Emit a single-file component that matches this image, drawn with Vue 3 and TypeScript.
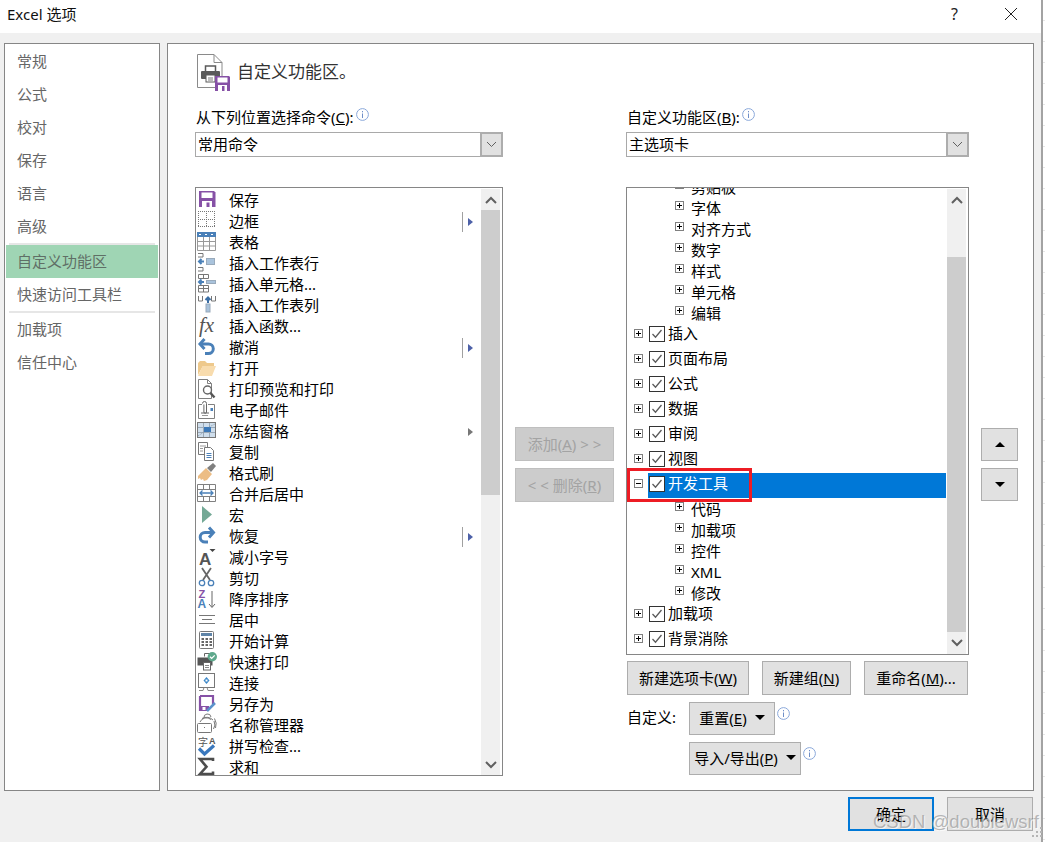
<script setup lang="ts">
const navTop = ['常规', '公式', '校对', '保存', '语言', '高级']
const navBottom = ['加载项', '信任中心']

const b = '#4a80b8'
const lb = '#a9c3dc'
const icons: Record<string, string> = {
  save: `<path fill="#8651a6" d="M2 1h15l1.500 1.500V17H2z"/><rect x="4.500" y="2.500" width="11" height="5.500" fill="#fff"/><rect x="5" y="11" width="10" height="6" fill="#fff"/><rect x="9.500" y="12.500" width="3" height="4.500" fill="#8651a6"/>`,
  border: `<path fill="none" stroke="#777" stroke-dasharray="1 1" d="M1 .5h17M1 8.500h17M1 15.500h17M1.500 0v16M9.500 0v16M17.500 0v16"/>`,
  table: `<rect x="0" y="0" width="19" height="5" fill="${b}"/><path fill="#fff" d="M2 2h2v1H2zM8 2h2v1H8zM14 2h2v1h-2z"/><path fill="none" stroke="#999" d="M.5 5v13.500h18V5M.5 9.500h18M.5 14h18M6.500 5v13.500M12.500 5v13.500"/>`,
  insRow: `<path fill="none" stroke="#777" d="M1 .5h5v3.500H1M1 14.500h5V18H1"/><rect x="9.500" y="5.500" width="8" height="6" fill="${lb}" stroke="#9ab"/><path fill="none" stroke="${b}" stroke-width="2" d="M7 8.500H2M4.500 6L2 8.500 4.500 11"/>`,
  insCell: `<path fill="none" stroke="#777" d="M1.500 .5h10v4h-10zM6.500 .5v4M1.500 11.500h10v6.500h-10zM1.500 14.500h10M6.500 11.500v6.500"/><rect x="9.500" y="6.500" width="9" height="3" fill="${lb}" stroke="#9ab"/><path fill="none" stroke="${b}" stroke-width="2" d="M7 8H2M4.500 5.500L2 8l2.500 2.500"/>`,
  insCol: `<path fill="none" stroke="#777" d="M1.500 1v5h4V1M14.500 1v5h4V1"/><rect x="9" y="9" width="4" height="8" fill="${lb}" stroke="#9ab"/><path fill="none" stroke="#3a6ea5" stroke-width="2" d="M11 8V2.500M8.500 5L11 2.500 13.500 5"/>`,
  fx: `<text x="2" y="16" font-family="Liberation Serif" font-style="italic" font-size="21" fill="#555">fx</text>`,
  undo: `<path fill="none" stroke="${b}" stroke-width="3" d="M4 7h7.500a4.800 4.800 0 0 1 0 9.600H8"/><path fill="none" stroke="${b}" stroke-width="3" d="M7.500 2L3 7l4.500 5"/>`,
  open: `<path fill="#eec98c" d="M1 17V5l2-2h5l2 2h7v3H6L1 17z"/><path fill="#f8dcae" d="M1 18L5.500 8H19l-4 10z"/>`,
  preview: `<path fill="#fff" stroke="#808080" d="M1.500 .5h9l4 4v15h-13z"/><path fill="none" stroke="#808080" d="M10.500 .5v4h4"/><circle cx="10.500" cy="11" r="4" fill="#fff" stroke="#666" stroke-width="1.400"/><path stroke="#555" stroke-width="2.400" d="M13.500 14l4 4.500"/>`,
  mail: `<path fill="none" stroke="#808080" d="M5 4.500H1.500v14h16v-14H11"/><rect x="13.500" y="8" width="2.500" height="3" fill="${b}"/><path fill="none" stroke="#666" d="M5.500 3.500a2 2 0 0 1 4 0v8.500a1.300 1.300 0 0 1-2.600 0V4.500M4 13h8"/><path stroke="#999" d="M5 15.500h6"/>`,
  freeze: `<rect x=".5" y="1.500" width="18" height="15" fill="#fff" stroke="#777"/><path fill="#cfdeec" d="M1 2h17v14H1z"/><path fill="none" stroke="#9aa9b8" d="M1 6.500h17M1 11.500h17M6.500 2v14M12.500 2v14"/><rect x="7" y="6" width="7" height="5" fill="#3b78b8"/><path stroke="#8899aa" stroke-dasharray="1 1" d="M1 15l6-4M12 6l6-3"/>`,
  copy: `<path fill="#fff" stroke="#777" d="M1.500 .5h9v12h-9z"/><path fill="#fff" stroke="#777" d="M7.500 5.500h6l3 3v10h-9z"/><path stroke="${b}" d="M9.500 11.500h5M9.500 13.500h5M9.500 15.500h5"/><path stroke="#999" d="M3 4h6M3 6.500h3M3 9h3"/>`,
  brush: `<path fill="#ecbd85" d="M1 13L9 5l6 6-5 6-3 1-1-2-2 1-1-2-2 1z"/><path fill="#7f7f7f" d="M10 5l6-5 3 3-5 6z"/>`,
  merge: `<path fill="none" stroke="#808080" d="M.5 .5h18v17H.5zM.5 5.500h18M.5 12.500h18M6.500 .5v5M12.500 .5v5M6.500 12.500v5M12.500 12.500v5"/><path fill="none" stroke="${b}" stroke-width="1.300" d="M3 9h13M5.500 6.500L3 9l2.500 2.500M13.500 6.500L16 9l-2.500 2.500"/>`,
  macro: `<path fill="#74a996" d="M5 1l10 8.500L5 18z"/>`,
  redo: `<path fill="none" stroke="${b}" stroke-width="3" d="M15.500 6.500H8a4.800 4.800 0 0 0 0 9.600h3"/><path fill="none" stroke="${b}" stroke-width="3" d="M12 1.500l4.500 5-4.500 5"/>`,
  shrink: `<text x="2" y="18" font-family="Liberation Sans" font-weight="bold" font-size="17" fill="#555">A</text><path fill="#444" d="M12.500 2h6l-3 3z"/>`,
  cut: `<path stroke="#666" stroke-width="1.800" d="M5 0l8 12M14 0L6 12"/><circle cx="5" cy="15" r="2.700" fill="none" stroke="${b}" stroke-width="1.300"/><circle cx="14" cy="15" r="2.700" fill="none" stroke="${b}" stroke-width="1.300"/>`,
  sort: `<text x="1.500" y="9" font-family="Liberation Sans" font-weight="bold" font-size="11" fill="#8651a6">Z</text><text x="0.500" y="19" font-family="Liberation Sans" font-weight="bold" font-size="12" fill="${b}">A</text><path fill="none" stroke="#666" d="M15 2v16M12 15l3 3.500 3-3.500"/>`,
  center: `<path stroke="#777" d="M2 5.500h16M5 9.500h10M2 13.500h16"/>`,
  calc: `<rect x="2.500" y=".5" width="14" height="17" rx="1" fill="#fff" stroke="#777"/><rect x="4" y="2" width="11" height="3" fill="#5f84a8"/><path fill="#666" d="M4.500 7h2.500v2H4.500zM8.500 7H11v2H8.500zM12.500 7H15v2h-2.500zM4.500 10h2.500v2H4.500zM8.500 10H11v2H8.500zM12.500 10H15v2h-2.500zM4.500 13h2.500v2H4.500zM8.500 13H11v2H8.500zM12.500 13H15v2h-2.500z"/>`,
  qprint: `<path fill="none" stroke="#666" d="M7.500 4.500V1.500h6v4"/><rect x=".5" y="5.500" width="15" height="8" fill="#555"/><rect x="6.500" y="10.500" width="7" height="7.500" fill="#fff" stroke="#666"/><path stroke="#888" d="M8 13.500h4M8 15.500h4"/><circle cx="15.300" cy="4.700" r="4.700" fill="#5ea88c"/><path fill="none" stroke="#fff" stroke-width="1.300" d="M13 4.700l1.700 1.700 3-3"/>`,
  link: `<rect x="1.500" y=".5" width="16" height="14" fill="#fff" stroke="#777"/><path fill="#3a86c8" d="M9.500 4l3 3.500-3 3.500-3-3.500z"/><path fill="#fff" d="M8.500 6.500h2v2h-2z"/><path fill="none" stroke="#888" d="M2 17.500h4l1-3M10 14.500l1 3h6"/>`,
  saveas: `<path fill="none" stroke="#8651a6" stroke-width="2.200" d="M3 2h13v8M3 2v14h6"/><rect x="3" y="12" width="9" height="5" fill="#8651a6"/><rect x="5.500" y="13" width="3" height="3" fill="#fff"/><path stroke="#5b93cc" stroke-width="2.500" d="M10 17l8-8"/>`,
  names: `<rect x=".5" y="8.500" width="14" height="9" rx="1" fill="#fff" stroke="#777"/><path fill="none" stroke="#777" d="M3 7a7 7 0 0 1 11-2.500M5 3.500a9 9 0 0 1 11 1.500M16.500 14a8 8 0 0 0 .5-8M18.500 13a11 11 0 0 0-1-9.500M7 3a1 1 0 0 1 7-1"/><path stroke="#777" d="M7 12.500h1"/>`,
  spell: `<text x="1" y="10" font-family="Noto Sans CJK SC" font-size="10" fill="#555">字</text><text x="12" y="8" font-family="Liberation Sans" font-weight="bold" font-size="9" fill="#555">A</text><path fill="none" stroke="#3a78bd" stroke-width="3.200" d="M2 12.500l5.500 5.500L17 9.500"/>`,
  sum: `<path fill="none" stroke="#4d4d4d" stroke-width="2.600" d="M16 4V2H3l6.500 7.800L3 17h13v-2.500"/>`,
}

interface Cmd { t: string; i: string; sub?: 'blue' | 'gray' }
const commands: Cmd[] = [
  { t: '保存', i: 'save' },
  { t: '边框', i: 'border', sub: 'blue' },
  { t: '表格', i: 'table' },
  { t: '插入工作表行', i: 'insRow' },
  { t: '插入单元格...', i: 'insCell' },
  { t: '插入工作表列', i: 'insCol' },
  { t: '插入函数...', i: 'fx' },
  { t: '撤消', i: 'undo', sub: 'blue' },
  { t: '打开', i: 'open' },
  { t: '打印预览和打印', i: 'preview' },
  { t: '电子邮件', i: 'mail' },
  { t: '冻结窗格', i: 'freeze', sub: 'gray' },
  { t: '复制', i: 'copy' },
  { t: '格式刷', i: 'brush' },
  { t: '合并后居中', i: 'merge' },
  { t: '宏', i: 'macro' },
  { t: '恢复', i: 'redo', sub: 'blue' },
  { t: '减小字号', i: 'shrink' },
  { t: '剪切', i: 'cut' },
  { t: '降序排序', i: 'sort' },
  { t: '居中', i: 'center' },
  { t: '开始计算', i: 'calc' },
  { t: '快速打印', i: 'qprint' },
  { t: '连接', i: 'link' },
  { t: '另存为', i: 'saveas' },
  { t: '名称管理器', i: 'names' },
  { t: '拼写检查...', i: 'spell' },
  { t: '求和', i: 'sum' },
]

interface Node { t: string; lvl: 0 | 1; open?: boolean; sel?: boolean }
const tree: Node[] = [
  { t: '剪贴板', lvl: 1 },
  { t: '字体', lvl: 1 },
  { t: '对齐方式', lvl: 1 },
  { t: '数字', lvl: 1 },
  { t: '样式', lvl: 1 },
  { t: '单元格', lvl: 1 },
  { t: '编辑', lvl: 1 },
  { t: '插入', lvl: 0 },
  { t: '页面布局', lvl: 0 },
  { t: '公式', lvl: 0 },
  { t: '数据', lvl: 0 },
  { t: '审阅', lvl: 0 },
  { t: '视图', lvl: 0 },
  { t: '开发工具', lvl: 0, open: true, sel: true },
  { t: '代码', lvl: 1 },
  { t: '加载项', lvl: 1 },
  { t: '控件', lvl: 1 },
  { t: 'XML', lvl: 1 },
  { t: '修改', lvl: 1 },
  { t: '加载项', lvl: 0 },
  { t: '背景消除', lvl: 0 },
]
</script>

<template>
  <div class="screen">
    <div class="dialog">
      <header class="titlebar">
        <span class="title">Excel 选项</span>
        <span class="help">?</span>
        <svg class="close" width="14" height="14" viewBox="0 0 14 14"><path d="M1 1l12 12M13 1L1 13" stroke="#222" fill="none" /></svg>
      </header>

      <div class="content">
        <nav class="sidebar">
          <div v-for="n in navTop" :key="n" class="nav">{{ n }}</div>
          <div class="nav-sep"></div>
          <div class="nav active">自定义功能区</div>
          <div class="nav">快速访问工具栏</div>
          <div class="nav-sep"></div>
          <div v-for="n in navBottom" :key="n" class="nav">{{ n }}</div>
        </nav>

        <main class="panel">
          <div class="heading">
            <svg width="34" height="38" viewBox="0 0 34 38">
              <path d="M.5.5H17l8 8V33.500H.5z" fill="#fff" stroke="#8a8a8a" />
              <path d="M17 .5v8h8" fill="none" stroke="#8a8a8a" />
              <path d="M8.500 18v-6h10v6" fill="#fff" stroke="#5a5a5a" stroke-width="1.500" />
              <rect x="4" y="17" width="19" height="8" rx="1" fill="#5a5a5a" />
              <rect x="9" y="21" width="9" height="7" fill="#fff" stroke="#5a5a5a" />
              <path d="M11 24h5M11 26h5" stroke="#7a7a7a" />
              <path d="M18 22h14l1 1v14H18z" fill="#8651a6" />
              <rect x="20.500" y="23.500" width="10" height="5" fill="#fff" />
              <rect x="21" y="31" width="9" height="6" fill="#fff" />
              <rect x="25" y="32" width="2.500" height="5" fill="#8651a6" />
            </svg>
            <span>自定义功能区。</span>
          </div>

          <div class="cols">
            <section class="col-left">
              <div class="label">
                <span>从下列位置选择命令(<u>C</u>):</span>
                <svg class="info up" width="13" height="13" viewBox="0 0 13 13"><circle cx="6.500" cy="6.500" r="5.900" fill="none" stroke="#8aa8da" /><path d="M6.500 3v1.300M6.500 5.500v4.500" stroke="#6f8fc8" fill="none" /></svg>
              </div>
              <div class="select">
                <span class="select-text">常用命令</span>
                <span class="select-btn"><svg width="11" height="7" viewBox="0 0 11 7"><path d="M1 1l4.500 4.500L10 1" fill="none" stroke="#606060" /></svg></span>
              </div>
              <div class="list cmd-list">
                <div class="rows">
                  <div v-for="c in commands" :key="c.t" class="cmd">
                    <svg class="cmd-icon" width="20" height="21" viewBox="0 0 20 21" v-html="icons[c.i]"></svg>
                    <span class="cmd-text">{{ c.t }}</span>
                    <span v-if="c.sub" class="sub" :class="c.sub"><i></i></span>
                  </div>
                </div>
                <div class="scroll">
                  <div class="sb-btn"><svg width="12" height="8" viewBox="0 0 12 8"><path d="M1 7l5-5 5 5" fill="none" stroke="#606060" stroke-width="2" /></svg></div>
                  <div class="thumb thumb-left"></div>
                  <div class="track"></div>
                  <div class="sb-btn"><svg width="12" height="8" viewBox="0 0 12 8"><path d="M1 1l5 5 5-5" fill="none" stroke="#606060" stroke-width="2" /></svg></div>
                </div>
              </div>
            </section>

            <section class="col-mid">
              <button class="btn disabled move">添加(<u>A</u>) &gt; &gt;</button>
              <button class="btn disabled move">&lt; &lt; 删除(<u>R</u>)</button>
            </section>

            <section class="col-right">
              <div class="label">
                <span>自定义功能区(<u>B</u>):</span>
                <svg class="info up" width="13" height="13" viewBox="0 0 13 13"><circle cx="6.500" cy="6.500" r="5.900" fill="none" stroke="#8aa8da" /><path d="M6.500 3v1.300M6.500 5.500v4.500" stroke="#6f8fc8" fill="none" /></svg>
              </div>
              <div class="select">
                <span class="select-text">主选项卡</span>
                <span class="select-btn"><svg width="11" height="7" viewBox="0 0 11 7"><path d="M1 1l4.500 4.500L10 1" fill="none" stroke="#606060" /></svg></span>
              </div>
              <div class="list tree-list">
                <div class="rows tree-rows">
                  <div class="tree-scroll">
                    <div v-for="(n, i) in tree" :key="i" class="node" :class="n.lvl ? 'lvl1' : 'lvl0'">
                      <span v-if="n.sel" class="highlight"></span>
                      <svg class="exp" width="9" height="9" viewBox="0 0 9 9">
                        <rect x=".5" y=".5" width="8" height="8" fill="#fff" stroke="#808080" />
                        <path :d="n.open ? 'M2 4.500h5' : 'M2 4.500h5M4.500 2v5'" stroke="#000" fill="none" />
                      </svg>
                      <span v-if="!n.lvl" class="check">
                        <svg width="14" height="14" viewBox="0 0 14 14"><path d="M2.500 7l3 3.200L11.500 3" fill="none" stroke="#5a5a5a" stroke-width="1.300" /></svg>
                      </span>
                      <span class="node-text" :class="{ white: n.sel }">{{ n.t }}</span>
                    </div>
                  </div>
                </div>
                <div class="scroll">
                  <div class="sb-btn"><svg width="12" height="8" viewBox="0 0 12 8"><path d="M1 7l5-5 5 5" fill="none" stroke="#606060" stroke-width="2" /></svg></div>
                  <div class="track track-top"></div>
                  <div class="thumb thumb-right"></div>
                  <div class="sb-btn"><svg width="12" height="8" viewBox="0 0 12 8"><path d="M1 1l5 5 5-5" fill="none" stroke="#606060" stroke-width="2" /></svg></div>
                </div>
                <div class="red-mark"></div>
              </div>

              <div class="tree-actions">
                <button class="btn act-new-tab">新建选项卡(<u>W</u>)</button>
                <button class="btn act-new-group">新建组(<u>N</u>)</button>
                <button class="btn act-rename">重命名(<u>M</u>)...</button>
              </div>
              <div class="custom-row">
                <span class="custom-label">自定义:</span>
                <button class="btn drop reset">重置(<u>E</u>)<i class="tri"></i></button>
                <svg class="info" width="13" height="13" viewBox="0 0 13 13"><circle cx="6.500" cy="6.500" r="5.900" fill="none" stroke="#8aa8da" /><path d="M6.500 3v1.300M6.500 5.500v4.500" stroke="#6f8fc8" fill="none" /></svg>
              </div>
              <div class="custom-row second">
                <button class="btn drop export">导入/导出(<u>P</u>)<i class="tri"></i></button>
                <svg class="info" width="13" height="13" viewBox="0 0 13 13"><circle cx="6.500" cy="6.500" r="5.900" fill="none" stroke="#8aa8da" /><path d="M6.500 3v1.300M6.500 5.500v4.500" stroke="#6f8fc8" fill="none" /></svg>
              </div>
            </section>

            <section class="col-arrows">
              <button class="btn arrow"><i class="tri up-tri"></i></button>
              <button class="btn arrow"><i class="tri"></i></button>
            </section>
          </div>
        </main>
      </div>

      <footer class="footer">
        <button class="btn foot primary">确定</button>
        <button class="btn foot">取消</button>
      </footer>
    </div>
    <div class="strip"></div>
    <div class="watermark">CSDN @doublewsrf</div>
    <svg class="grip" width="12" height="12" viewBox="0 0 12 12"><path fill="#b5b5b5" d="M9 0h2v2H9zM5 4h2v2H5zM9 4h2v2H9zM1 8h2v2H1zM5 8h2v2H5zM9 8h2v2H9z" /></svg>
  </div>
</template>

<style scoped>
.screen {
  position: relative;
  display: flex;
  width: 1045px;
  height: 842px;
  overflow: hidden;
  font-family: "Noto Sans", "Noto Sans CJK SC", sans-serif;
  font-size: 15px;
  color: #000;
  background: #fff;
}
.dialog {
  display: flex;
  flex-direction: column;
  width: 1041px;
  height: 842px;
  background: #f0f0f0;
}
.strip {
  flex: 1;
  border-left: 2px solid #a3a3a3;
  background: repeating-linear-gradient(#fff 0, #fff 20px, #e6e6e6 20px, #e6e6e6 21px);
}
.titlebar {
  position: relative;
  display: flex;
  align-items: center;
  flex: none;
  height: 33px;
  padding-left: 7px;
  background: #fff;
}
.title {
  flex: 1;
  font-size: 15px;
  line-height: 20px;
  margin-top: -6px;
  color: #111;
}
.help {
  margin: -5px 0 0 0;
  line-height: 20px;
  font-size: 16px;
  color: #222;
}
.close {
  margin: -5px 23px 0 46px;
}
.content {
  display: flex;
  flex: none;
  gap: 7px;
  height: 748px;
  margin-top: 10px;
  padding-left: 4px;
}
.sidebar {
  flex: none;
  width: 156px;
  padding: 1px;
  box-sizing: border-box;
  background: #fff;
  border: 1px solid #868686;
}
.nav {
  height: 33px;
  padding-left: 11px;
  line-height: 33px;
  color: #666;
}
.nav.active {
  background: #9fd5b4;
  color: #5f6f66;
}
.nav-sep {
  height: 2px;
  margin: 0 3px;
  background: #e6e6e6;
}
.panel {
  flex: none;
  width: 867px;
  box-sizing: border-box;
  padding: 10px 14px 0 27px;
  background: #fff;
  border: 1px solid #868686;
}
.heading {
  display: flex;
  align-items: center;
  gap: 6px;
  height: 38px;
  margin: 0 0 15px 2px;
  font-size: 17px;
  color: #333;
}
.heading span { margin-bottom: 5px; }
.cols {
  display: flex;
}
.col-left {
  flex: none;
  width: 308px;
}
.col-mid {
  display: flex;
  flex-direction: column;
  flex: none;
  gap: 7px;
  width: 123px;
  padding: 320px 0 0 12px;
  box-sizing: border-box;
}
.col-right {
  flex: none;
  width: 343px;
}
.col-arrows {
  display: flex;
  flex-direction: column;
  flex: none;
  gap: 7px;
  width: 37px;
  margin-left: 12px;
  padding-top: 321px;
}
.label {
  display: flex;
  height: 20px;
  margin-left: 1px;
  line-height: 20px;
}
.info { flex: none; }
.info.up { margin: 1px 0 0 2px; }
.select {
  display: flex;
  align-items: stretch;
  height: 25px;
  margin-top: 5px;
  box-sizing: border-box;
  background: #fff;
  border: 1px solid #a9a9a9;
}
.select-text {
  flex: 1;
  padding-left: 2px;
  line-height: 23px;
}
.select-btn {
  display: flex;
  align-items: center;
  justify-content: center;
  width: 23px;
  box-sizing: border-box;
  background: #e1e1e1;
  margin: -1px -1px -1px 0;
  border: 2px solid #adadad;
}
.list {
  position: relative;
  display: flex;
  margin-top: 30px;
  box-sizing: border-box;
  background: #fff;
  border: 1px solid #868686;
  overflow: hidden;
}
.cmd-list { height: 589px; }
.tree-list { height: 468px; }
.rows {
  flex: 1;
  min-width: 0;
  padding-top: 2px;
  overflow: hidden;
}
.tree-rows {
  padding-top: 0;
}
.tree-scroll {
  margin-top: -14px;
}
.cmd {
  display: flex;
  align-items: center;
  height: 21px;
  padding-left: 1px;
}
.cmd-icon {
  flex: none;
  margin-right: 12px;
  overflow: visible;
}
.cmd-text {
  flex: 1;
  line-height: 21px;
}
.sub {
  display: flex;
  align-items: center;
  flex: none;
  width: 19px;
  height: 20px;
  box-sizing: border-box;
  padding-left: 5px;
  border-left: 1px solid #a0a0a0;
}
.sub.gray { border-left-color: transparent; }
.sub i {
  width: 0;
  height: 0;
  border-top: 4.500px solid transparent;
  border-bottom: 4.500px solid transparent;
  border-left: 5px solid #4d61a8;
}
.sub.gray i { border-left-color: #777; }
.scroll {
  display: flex;
  flex-direction: column;
  flex: none;
  width: 19px;
  margin: 1px 2px 0 0;
  background: #f0f0f0;
}
.sb-btn {
  display: flex;
  align-items: center;
  justify-content: center;
  flex: none;
  height: 21px;
}
.thumb { background: #cdcdcd; }
.thumb-left { height: 285px; }
.thumb-right { height: 375px; }
.track { flex: 1; }
.track-top { flex: none; height: 47px; }
.node {
  position: relative;
  display: flex;
  align-items: center;
  box-sizing: border-box;
}
.lvl0 {
  height: 25px;
  padding-left: 7px;
}
.lvl1 {
  height: 21px;
  padding-left: 48px;
}
.exp {
  position: relative;
  flex: none;
}
.highlight {
  position: absolute;
  top: 2px;
  left: 21px;
  width: 298px;
  height: 25px;
  background: #0078d7;
}
.check {
  position: relative;
  display: flex;
  flex: none;
  width: 16px;
  height: 16px;
  margin-left: 6px;
  box-sizing: border-box;
  background: #fff;
  border: 1px solid #333;
}
.node-text {
  position: relative;
  line-height: 21px;
}
.lvl0 .node-text { margin-left: 3px; }
.lvl1 .node-text { margin: 6px 0 0 7px; }
.node-text.white { color: #fff; }
.red-mark {
  position: absolute;
  top: 280px;
  left: 0;
  width: 125px;
  height: 34px;
  box-sizing: border-box;
  border: 3px solid #ed1c24;
}
.btn {
  box-sizing: border-box;
  padding: 0;
  font: inherit;
  line-height: 20px;
  color: #000;
  background: #e1e1e1;
  border: 1px solid #adadad;
  border-radius: 0;
}
.btn u { text-underline-offset: 1px; }
.disabled {
  color: #a3a3a3;
  background: #cccccc;
  border-color: #bfbfbf;
}
.move {
  width: 99px;
  height: 34px;
}
.tree-actions {
  display: flex;
  gap: 13px;
  height: 34px;
  margin: 6px 0 0 1px;
}
.act-new-tab { width: 122px; }
.act-new-group { width: 89px; }
.act-rename { width: 104px; }
.custom-row {
  display: flex;
  height: 33px;
  margin-top: 7px;
  padding-left: 1px;
}
.custom-label {
  width: 62px;
  line-height: 30px;
}
.second { padding-left: 63px; }
.drop {
  display: flex;
  align-items: center;
  justify-content: center;
  height: 33px;
  padding-bottom: 2px;
}
.reset { width: 86px; }
.export { width: 112px; }
.custom-row .info { margin: 5px 0 0 2px; }
.tri {
  display: inline-block;
  width: 0;
  height: 0;
  margin-left: 8px;
  border-left: 5px solid transparent;
  border-right: 5px solid transparent;
  border-top: 5px solid #000;
}
.arrow {
  display: flex;
  align-items: center;
  justify-content: center;
  width: 37px;
  height: 33px;
}
.arrow .tri { margin: 0; }
.up-tri {
  border-top: 0;
  border-bottom: 5px solid #000;
}
.footer {
  display: flex;
  justify-content: flex-end;
  gap: 13px;
  padding: 6px 8px 0 0;
}
.foot {
  width: 86px;
  height: 34px;
}
.primary { border: 2px solid #0078d7; }
.watermark {
  position: absolute;
  left: 873px;
  top: 810px;
  font-family: "Liberation Sans", sans-serif;
  font-size: 18.500px;
  line-height: 24px;
  white-space: nowrap;
  color: rgba(130, 130, 130, 0.55);
  text-shadow: 1px 1px 0 rgba(255, 255, 255, 0.7);
}
.grip {
  position: absolute;
  left: 1031px;
  top: 827px;
}
</style>
